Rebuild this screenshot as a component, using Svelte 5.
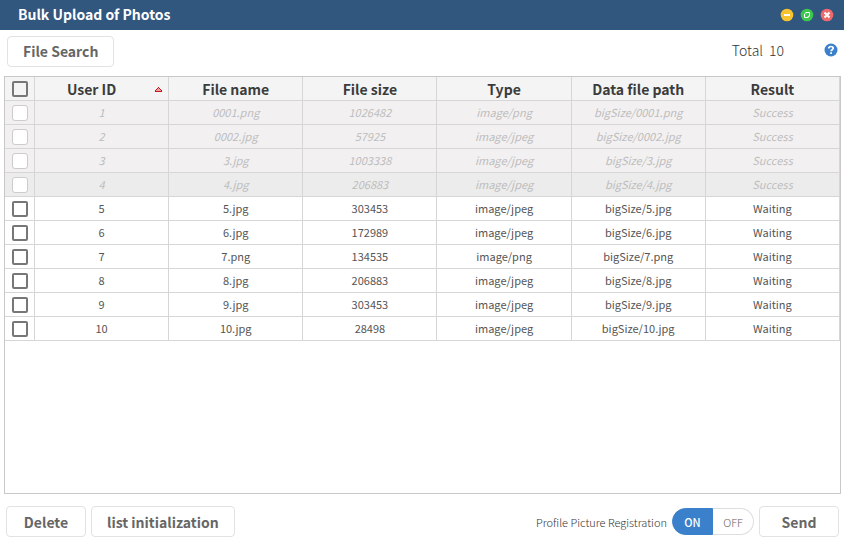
<script>
  const columns = ['User ID', 'File name', 'File size', 'Type', 'Data file path', 'Result'];

  let rows = $state([
    { id: '1', name: '0001.png', size: '1026482', type: 'image/png', done: true, checked: false },
    { id: '2', name: '0002.jpg', size: '57925', type: 'image/jpeg', done: true, checked: false },
    { id: '3', name: '3.jpg', size: '1003338', type: 'image/jpeg', done: true, checked: false },
    { id: '4', name: '4.jpg', size: '206883', type: 'image/jpeg', done: true, current: true, checked: false },
    { id: '5', name: '5.jpg', size: '303453', type: 'image/jpeg', done: false, checked: false },
    { id: '6', name: '6.jpg', size: '172989', type: 'image/jpeg', done: false, checked: false },
    { id: '7', name: '7.png', size: '134535', type: 'image/png', done: false, checked: false },
    { id: '8', name: '8.jpg', size: '206883', type: 'image/jpeg', done: false, checked: false },
    { id: '9', name: '9.jpg', size: '303453', type: 'image/jpeg', done: false, checked: false },
    { id: '10', name: '10.jpg', size: '28498', type: 'image/jpeg', done: false, checked: false }
  ]);

  let registration = $state('on');

  function toggleAll(event) {
    for (const row of rows) if (!row.done) row.checked = event.currentTarget.checked;
  }
</script>

<div class="window">
  <header class="titlebar">
    <h1>Bulk Upload of Photos</h1>
    <div class="controls">
      <button aria-label="Minimize">
        <svg viewBox="0 0 14 14"><circle cx="7" cy="7" r="6.3" fill="#f7c331" /><path d="M4 7h6" stroke="#fff" stroke-width="2" /></svg>
      </button>
      <button aria-label="Maximize">
        <svg viewBox="0 0 14 14"><circle cx="7" cy="7" r="6.3" fill="#3cc84c" /><path d="M5.8 4.5h3.7v3.7H8.2M5.8 4.5v1.3M8.2 9.5H4.5V5.8M8.2 9.5V8.2" fill="none" stroke="#fff" stroke-width="1" /></svg>
      </button>
      <button aria-label="Close">
        <svg viewBox="0 0 14 14"><circle cx="7" cy="7" r="6.3" fill="#ee6a6c" /><path d="M4.5 4.5l5 5M9.5 4.5l-5 5" stroke="#fff" stroke-width="2" /></svg>
      </button>
    </div>
  </header>

  <div class="toolbar">
    <button class="btn">File Search</button>
    <div class="summary">
      <span>Total</span>
      <span class="count">{rows.length}</span>
      <button class="help" aria-label="Help">
        <svg viewBox="0 0 14 14"><circle cx="7" cy="7" r="6.5" fill="#3a80ca" /><path d="M4.8 5.5C4.8 4.1 5.8 3.5 7 3.5s2.2.7 2.2 1.8c0 1.4-2.1 1.5-2.1 3" fill="none" stroke="#fff" stroke-width="1.7" /><path d="M6.2 9.3h1.8v1.7H6.2z" fill="#fff" /></svg>
      </button>
    </div>
  </div>

  <main class="grid">
    <table>
      <thead>
        <tr>
          <th class="pick"><input type="checkbox" aria-label="Select all" onchange={toggleAll} /></th>
          {#each columns as column, i}
            <th class:sorted={i === 0}>
              {column}
              {#if i === 0}
                <svg class="sort" viewBox="0 0 7 5" shape-rendering="crispEdges"><path d="M3 0h1v1h1v1h1v1h1v2H0V3h1V2h1V1h1z" fill="#c4161c" /><path d="M3 1h1v1h1v1h1v1H1V3h1V2h1z" fill="#f4a0a0" /></svg>
              {/if}
            </th>
          {/each}
        </tr>
      </thead>
      <tbody>
        {#each rows as row (row.id)}
          <tr class:done={row.done} class:current={row.current}>
            <td class="pick"><input type="checkbox" aria-label="Select user {row.id}" disabled={row.done} bind:checked={row.checked} /></td>
            <td>{row.id}</td>
            <td>{row.name}</td>
            <td>{row.size}</td>
            <td>{row.type}</td>
            <td>bigSize/{row.name}</td>
            <td>{row.done ? 'Success' : 'Waiting'}</td>
          </tr>
        {/each}
      </tbody>
    </table>
  </main>

  <footer class="actions">
    <button class="btn">Delete</button>
    <button class="btn">list initialization</button>
    <div class="registration" role="radiogroup" aria-labelledby="registration-label">
      <span id="registration-label">Profile Picture Registration</span>
      <div class="switch">
        <label class:active={registration === 'on'}><input type="radio" name="registration" value="on" bind:group={registration} />ON</label>
        <label class:active={registration === 'off'}><input type="radio" name="registration" value="off" bind:group={registration} />OFF</label>
      </div>
    </div>
    <button class="btn">Send</button>
  </footer>
</div>

<style>
  .window {
    display: flex;
    flex-direction: column;
    min-height: 100vh;
    background: #fff;
    color: #333;
    font-family: "Noto Sans CJK KR", "Noto Sans", sans-serif;
    font-size: 11px;
  }
  .window * {
    box-sizing: border-box;
  }
  button {
    font-family: inherit;
    cursor: pointer;
  }
  svg {
    display: block;
  }
  .titlebar {
    display: flex;
    align-items: center;
    justify-content: space-between;
    height: 30px;
    padding: 0 10px 2px 18px;
    background: #32577f;
  }
  h1 {
    margin: 0;
    color: #fff;
    font-size: 14px;
    line-height: 20px;
    font-weight: 700;
  }
  .controls {
    display: flex;
    gap: 6px;
    padding-top: 1px;
  }
  .controls button,
  .help {
    width: 14px;
    height: 14px;
    padding: 0;
    border: 0;
    background: none;
  }
  .toolbar {
    display: flex;
    align-items: center;
    justify-content: space-between;
    height: 46px;
    padding: 0 6px 4px 7px;
  }
  .btn {
    min-width: 80px;
    height: 31px;
    padding: 0 15px;
    border: 1px solid #e2e2e2;
    border-radius: 4px;
    background: #fff;
    color: #666;
    font-size: 14px;
    line-height: 20px;
    font-weight: 700;
    white-space: nowrap;
  }
  .summary {
    display: flex;
    align-items: center;
    padding-bottom: 2px;
    font-size: 14px;
    line-height: 20px;
    font-weight: 300;
  }
  .count {
    margin: 0 40px 0 6px;
  }
  .grid {
    flex: 1;
    margin: 0 3px 0 4px;
    border: 1px solid #c8c8c8;
  }
  table {
    width: 100%;
    table-layout: fixed;
    border-collapse: separate;
    border-spacing: 0;
  }
  th,
  td {
    height: 24px;
    padding: 0;
    border: solid #d6d6d6;
    border-width: 0 1px 1px 0;
    text-align: center;
    line-height: 20px;
    white-space: nowrap;
  }
  th {
    background: #f4f4f4;
    color: #3c3c3c;
    font-size: 14px;
    font-weight: 700;
  }
  td:not(.pick) {
    padding-bottom: 2px;
    color: #555;
    font-size: 11px;
  }
  .pick {
    width: 30px;
  }
  .sorted {
    position: relative;
    padding-right: 20px;
  }
  .sort {
    position: absolute;
    top: 10px;
    right: 6px;
    width: 7px;
    height: 5px;
  }
  .done td {
    background: #f2f0f1;
    font-style: italic;
  }
  .done td:not(.pick) {
    color: #bdbdbd;
  }
  .current td {
    background: #ececec;
  }
  input[type='checkbox'] {
    appearance: none;
    display: block;
    width: 16px;
    height: 16px;
    margin: 0 auto;
    border: 2px solid #777;
    border-radius: 2px;
    background: transparent;
  }
  input[type='checkbox']:checked {
    background: #3a80ca;
  }
  input[type='checkbox']:disabled {
    border: 1px solid #ccc;
    border-radius: 3px;
    background: #fff;
  }
  .actions {
    display: flex;
    align-items: center;
    gap: 5px;
    height: 48px;
    padding: 7px 5px 0 6px;
  }
  .registration {
    display: flex;
    align-items: center;
    gap: 5px;
    margin-left: auto;
    line-height: 20px;
    font-weight: 300;
  }
  .switch {
    display: flex;
  }
  .switch label {
    position: relative;
    width: 41px;
    height: 27px;
    border: 1px solid #ddd;
    color: #666;
    line-height: 26px;
    text-align: center;
    cursor: pointer;
  }
  .switch label:first-child {
    border-radius: 14px 0 0 14px;
  }
  .switch label:last-child {
    border-left: 0;
    border-radius: 0 14px 14px 0;
  }
  .switch .active {
    border-color: #3a80ca;
    background: #3a80ca;
    color: #fff;
    font-weight: 500;
  }
  .switch input {
    position: absolute;
    inset: 0;
    margin: 0;
    opacity: 0;
  }
</style>
